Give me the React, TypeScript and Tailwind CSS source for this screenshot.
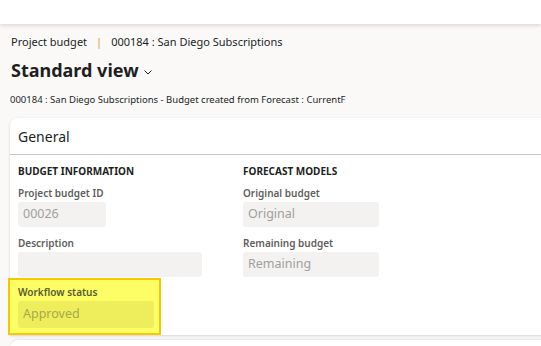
export default function App() {
  const font = { fontFamily: '"Segoe UI", "Noto Sans", sans-serif' };

  return (
    <div className="w-[541px] h-[346px] overflow-hidden bg-[#faf9f8] text-[#201f1e]" style={font}>
      <div className="h-[24px] bg-white shadow-[0_2px_4px_rgba(0,0,0,0.12)]" />

      <div className="pl-[11px] pt-[10px] text-[11px] leading-[16px] flex items-center">
        <span>Project budget</span>
        <span className="mx-[9px] text-[#d29a3a]">|</span>
        <span>000184 : San Diego Subscriptions</span>
      </div>

      <div className="pl-[11px] mt-[6px] flex items-center h-[28px]">
        <h1 className="text-[18px] font-bold leading-[28px]">Standard view</h1>
        <svg className="ml-[4px] mt-[4px]" width="10" height="10" viewBox="0 0 10 10">
          <path d="M1.5 3.5 L5 7 L8.5 3.5" fill="none" stroke="#201f1e" strokeWidth="1" />
        </svg>
      </div>

      <div className="pl-[10px] mt-[10px] text-[9.5px] leading-[12px]">
        000184 : San Diego Subscriptions - Budget created from Forecast : CurrentF
      </div>

      <div className="ml-[10px] mt-[12px] w-[560px] h-[217px] bg-white rounded-t-[8px] shadow-[0_1px_3px_rgba(0,0,0,0.15)]">
        <div className="h-[37px] border-b border-[#c8c6c4] flex items-center pl-[8px] text-[14px]">
          General
        </div>

        <div className="pl-[8px] pt-[9px] flex">
          <div className="w-[225px]">
            <div className="text-[10px] font-bold leading-[14px]">BUDGET INFORMATION</div>
            <div className="mt-[8px] text-[10px] font-semibold leading-[14px] text-[#605e5c]">Project budget ID</div>
            <div className="mt-[2px] w-[88px] h-[25px] rounded-[3px] bg-[#f3f2f1] flex items-center pl-[5px] text-[12.5px] text-[#a19f9d]">
              00026
            </div>
            <div className="mt-[9px] text-[10px] font-semibold leading-[14px] text-[#605e5c]">Description</div>
            <div className="mt-[2px] w-[184px] h-[25px] rounded-[3px] bg-[#f3f2f1]" />
            <div className="-ml-[10px] mt-[1px] w-[153px] h-[57px] border-2 border-[#f5c800] bg-[#fdfd66] pl-[8px] pt-[5px]">
              <div className="text-[10px] font-semibold leading-[14px] text-[#585a30]">Workflow status</div>
              <div className="mt-[2px] w-[136px] h-[27px] rounded-[3px] bg-[#eeee5c] flex items-center pl-[5px] text-[12.5px] text-[#a8a84c]">
                Approved
              </div>
            </div>
          </div>

          <div className="w-[200px]">
            <div className="text-[10px] font-bold leading-[14px]">FORECAST MODELS</div>
            <div className="mt-[8px] text-[10px] font-semibold leading-[14px] text-[#605e5c]">Original budget</div>
            <div className="mt-[2px] w-[136px] h-[25px] rounded-[3px] bg-[#f3f2f1] flex items-center pl-[5px] text-[12.5px] text-[#a19f9d]">
              Original
            </div>
            <div className="mt-[9px] text-[10px] font-semibold leading-[14px] text-[#605e5c]">Remaining budget</div>
            <div className="mt-[2px] w-[136px] h-[25px] rounded-[3px] bg-[#f3f2f1] flex items-center pl-[5px] text-[12.5px] text-[#a19f9d]">
              Remaining
            </div>
          </div>
        </div>
      </div>

      <div className="ml-[10px] mt-[5px] w-[560px] h-[20px] bg-white rounded-t-[8px] shadow-[0_-1px_2px_rgba(0,0,0,0.08)]" />
    </div>
  );
}
